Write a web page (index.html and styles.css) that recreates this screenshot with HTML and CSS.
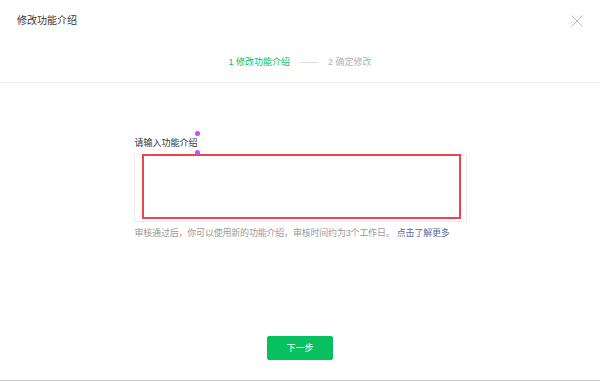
FILE: index.html
```html
<!DOCTYPE html>
<html lang="zh-CN">
<head>
    <meta charset="UTF-8">
    <title>修改功能介绍</title>
    <link rel="stylesheet" href="styles.css">
</head>
<body>
    <div class="dialog">
        <div class="dialog-hd">
            <h3 class="dialog-title">修改功能介绍</h3>
            <a class="dialog-close" href="javascript:;">
                <svg width="12" height="12" viewBox="0 0 12 12">
                    <path d="M0.5 0.5L11.5 11.5M11.5 0.5L0.5 11.5" stroke="#b8b8b8" stroke-width="1" fill="none"/>
                </svg>
            </a>
            <ul class="steps">
                <li class="step current">1 修改功能介绍</li>
                <li class="step-line"></li>
                <li class="step">2 确定修改</li>
            </ul>
        </div>
        <div class="dialog-bd">
            <div class="form">
                <span class="dot dot-top"></span>
                <span class="dot dot-bottom"></span>
                <label class="form-label">请输入功能介绍</label>
                <div class="textarea-box">
                    <div class="textarea"></div>
                </div>
                <p class="form-tips">审核通过后，你可以使用新的功能介绍，审核时间约为3个工作日。 <a href="javascript:;">点击了解更多</a></p>
            </div>
        </div>
        <div class="dialog-ft">
            <a class="btn-primary" href="javascript:;">下一步</a>
        </div>
    </div>
</body>
</html>
```

FILE: styles.css
```css
*{
    margin: 0;
    padding: 0;
    box-sizing: border-box;
}
body{
    font-family: "Liberation Sans", "Noto Sans CJK SC", sans-serif;
    background: #fff;
}
a{
    text-decoration: none;
}
ul{
    list-style: none;
}

.dialog{
    width: 600px;
    height: 381px;
    display: flex;
    flex-direction: column;
    border-bottom: 1px solid #c8c8c8;
}

.dialog-hd{
    position: relative;
    padding: 15px 17px 14px;
    border-bottom: 1px solid #ededed;
}
.dialog-title{
    font-size: 10px;
    line-height: 12px;
    font-weight: normal;
    color: #353535;
}
.dialog-close{
    position: absolute;
    top: 15px;
    right: 17px;
    width: 12px;
    height: 12px;
    display: block;
}
.dialog-close svg{
    display: block;
}

.steps{
    margin-top: 29px;
    display: flex;
    justify-content: center;
    align-items: center;
    gap: 10px;
    font-size: 9px;
    line-height: 12px;
    color: #b2b2b2;
}
.step.current{
    color: #07c160;
}
.step-line{
    width: 18px;
    height: 1px;
    background: #dcdcdc;
}

.dialog-bd{
    flex: 1;
    padding-top: 54px;
}
.form{
    position: relative;
    width: 333px;
    margin: 0 auto;
}
.form-label{
    display: block;
    padding-left: 1px;
    font-size: 9px;
    line-height: 12px;
    color: #353535;
}
.textarea-box{
    margin-top: 5px;
    padding: 0 5px 2px 7px;
    border: 1px solid #ebebeb;
    border-top-color: #f2f2f2;
}
.textarea{
    height: 65px;
    margin-top: -1px;
    border: 2px solid #ec4550;
}
.form-tips{
    margin-top: 5px;
    padding-left: 1px;
    font-size: 9px;
    line-height: 12px;
    letter-spacing: -0.2px;
    color: #9a9a9a;
}
.form-tips a{
    color: #576b95;
}

.dot{
    position: absolute;
    left: 61px;
    width: 5px;
    height: 5px;
    border-radius: 50%;
    background: #c94cf5;
}
.dot-top{
    top: -6px;
}
.dot-bottom{
    top: 13px;
}

.dialog-ft{
    display: flex;
    justify-content: center;
    padding-bottom: 20px;
}
.btn-primary{
    width: 66px;
    height: 24px;
    line-height: 24px;
    text-align: center;
    font-size: 9px;
    color: #fff;
    background: #07c160;
    border-radius: 2px;
}
```
